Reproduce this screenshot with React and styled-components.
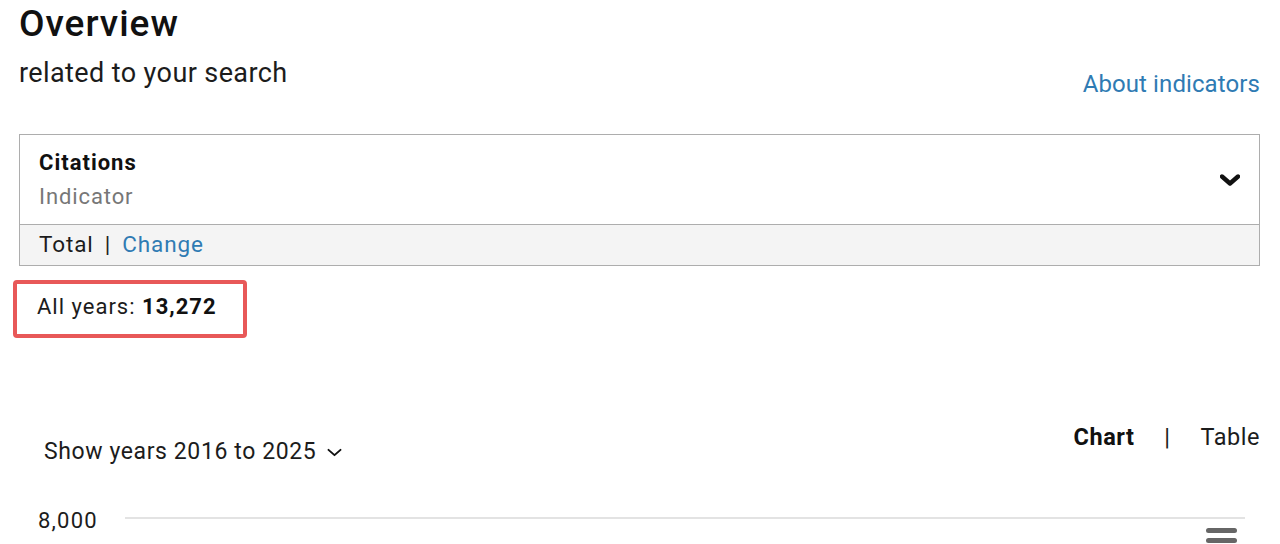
import React from "react";
import styled, { createGlobalStyle } from "styled-components";

const Global = createGlobalStyle`
  html, body { margin: 0; padding: 0; background: #fff; }
  body { font-family: Roboto, "Liberation Sans", Arial, sans-serif; color: #1c1c1c; overflow: hidden; }
`;

const Page = styled.div`
  width: 1280px;
  height: 544px;
  box-sizing: border-box;
  padding: 0 20px 0 19px;
  overflow: hidden;
`;

const Header = styled.header`
  display: flex;
  justify-content: space-between;
  align-items: flex-start;
`;

const TitleBlock = styled.div`
  display: flex;
  flex-direction: column;
`;

const Title = styled.h1`
  margin: 2px 0 0;
  font-size: 37px;
  line-height: 44px;
  font-weight: 500;
  letter-spacing: 1px;
  color: #111;
`;

const Subtitle = styled.p`
  margin: 11px 0 0;
  font-size: 27px;
  line-height: 32px;
  font-weight: 400;
  letter-spacing: 0.4px;
  color: #1c1c1c;
`;

const Link = styled.a`
  color: #2f7bb3;
  text-decoration: none;
  cursor: pointer;
`;

const AboutLink = styled(Link)`
  margin-top: 69px;
  font-size: 24px;
  line-height: 30px;
  letter-spacing: 0.1px;
`;

const IndicatorBox = styled.section`
  margin-top: 35px;
  border: 1px solid #adadad;
`;

const IndicatorTop = styled.div`
  display: flex;
  justify-content: space-between;
  align-items: center;
  padding: 15px 19px 14px 19px;
`;

const IndicatorText = styled.div`
  display: flex;
  flex-direction: column;
  gap: 8px;
`;

const IndicatorName = styled.div`
  font-size: 22px;
  line-height: 26px;
  font-weight: 700;
  letter-spacing: 1px;
  color: #111;
`;

const IndicatorLabel = styled.div`
  font-size: 22px;
  line-height: 26px;
  letter-spacing: 0.9px;
  color: #777;
`;

const IndicatorBand = styled.div`
  display: flex;
  align-items: center;
  gap: 11px;
  background: #f4f4f4;
  border-top: 1px solid #adadad;
  padding: 6px 19px 8px 19px;
  font-size: 22.5px;
  line-height: 26px;
  letter-spacing: 0.9px;
`;

const Sep = styled.span`
  color: #222;
`;

const Highlight = styled.div`
  display: inline-block;
  margin: 14px 0 0 -6px;
  border: 4px solid #e85858;
  border-radius: 4px;
  padding: 10px 26px 14px 20px;
  font-size: 22px;
  line-height: 26px;
  letter-spacing: 1px;
  color: #1c1c1c;
  b { font-weight: 700; color: #111; }
`;

const Controls = styled.div`
  display: flex;
  justify-content: space-between;
  align-items: flex-start;
  margin-top: 85px;
`;

const YearsButton = styled.button`
  display: flex;
  align-items: center;
  gap: 11px;
  margin: 15px 0 0 25px;
  padding: 0;
  border: 0;
  background: none;
  font-family: inherit;
  font-size: 23px;
  line-height: 28px;
  letter-spacing: 0.6px;
  color: #1c1c1c;
  cursor: pointer;
`;

const ViewToggle = styled.div`
  display: flex;
  align-items: center;
  gap: 30px;
  font-size: 23.5px;
  line-height: 28px;
  letter-spacing: 0.5px;
`;

const ViewOption = styled.span`
  font-weight: ${(p) => (p.$active ? 700 : 400)};
  color: ${(p) => (p.$active ? "#111" : "#1c1c1c")};
`;

const ChartArea = styled.div`
  position: relative;
  display: flex;
  align-items: flex-start;
  margin-top: 43px;
  height: 40px;
`;

const YLabel = styled.div`
  width: 106px;
  padding-left: 19px;
  box-sizing: border-box;
  font-size: 22px;
  line-height: 24px;
  letter-spacing: 1.2px;
  color: #1c1c1c;
`;

const GridLine = styled.div`
  flex: 1;
  margin: 8px 15px 0 0;
  height: 2px;
  background: #e3e3e3;
`;

const MenuButton = styled.div`
  position: absolute;
  right: 23px;
  top: 19px;
  display: flex;
  flex-direction: column;
  gap: 5px;
`;

const MenuBar = styled.span`
  display: block;
  width: 31px;
  height: 5px;
  border-radius: 3px;
  background: #666;
`;

function Chevron({ size = 20, stroke = 4 }) {
  return (
    <svg width={size} height={size * 0.6} viewBox="0 0 20 12" fill="none">
      <polyline
        points="2,2.5 10,9.5 18,2.5"
        stroke="#111"
        strokeWidth={stroke}
        strokeLinecap="round"
        strokeLinejoin="round"
      />
    </svg>
  );
}

export default function App() {
  return (
    <>
      <Global />
      <Page>
        <Header>
          <TitleBlock>
            <Title>Overview</Title>
            <Subtitle>related to your search</Subtitle>
          </TitleBlock>
          <AboutLink>About indicators</AboutLink>
        </Header>

        <IndicatorBox>
          <IndicatorTop>
            <IndicatorText>
              <IndicatorName>Citations</IndicatorName>
              <IndicatorLabel>Indicator</IndicatorLabel>
            </IndicatorText>
            <Chevron size={20} stroke={4.4} />
          </IndicatorTop>
          <IndicatorBand>
            <span>Total</span>
            <Sep>|</Sep>
            <Link>Change</Link>
          </IndicatorBand>
        </IndicatorBox>

        <Highlight>
          All years: <b>13,272</b>
        </Highlight>

        <Controls>
          <YearsButton>
            Show years 2016 to 2025
            <Chevron size={15} stroke={2.6} />
          </YearsButton>
          <ViewToggle>
            <ViewOption $active>Chart</ViewOption>
            <span>|</span>
            <ViewOption>Table</ViewOption>
          </ViewToggle>
        </Controls>

        <ChartArea>
          <YLabel>8,000</YLabel>
          <GridLine />
          <MenuButton>
            <MenuBar />
            <MenuBar />
            <MenuBar />
          </MenuButton>
        </ChartArea>
      </Page>
    </>
  );
}
